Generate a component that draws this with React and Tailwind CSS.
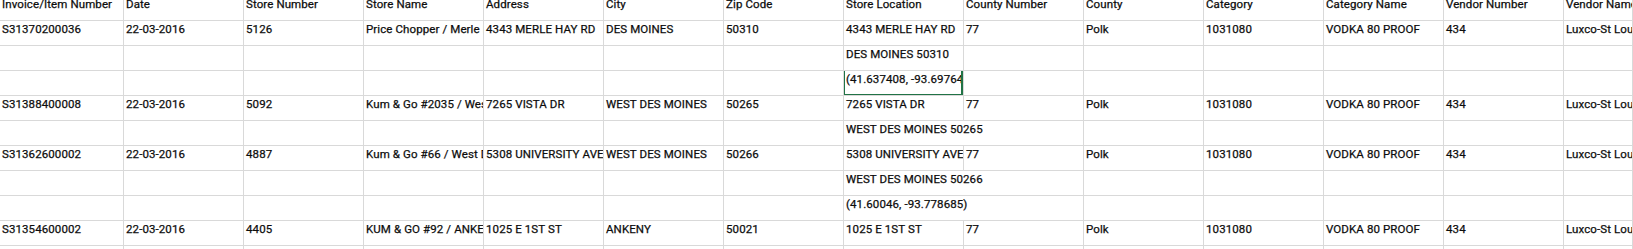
import React from "react";

const headers = [
  "Invoice/Item Number",
  "Date",
  "Store Number",
  "Store Name",
  "Address",
  "City",
  "Zip Code",
  "Store Location",
  "County Number",
  "County",
  "Category",
  "Category Name",
  "Vendor Number",
  "Vendor Name",
];

const full = (inv, store, name, addr, city, zip) => [
  inv,
  "22-03-2016",
  store,
  name,
  addr,
  city,
  zip,
  addr,
  "77",
  "Polk",
  "1031080",
  "VODKA 80 PROOF",
  "434",
  "Luxco-St Louis",
];

const loc = (text) => {
  const cells = Array(14).fill("");
  cells[7] = text;
  return cells;
};

// spill: the store location text runs over the empty cell next to it
const rows = [
  { cells: headers },
  {
    cells: full("S31370200036", "5126", "Price Chopper / Merle Hay", "4343 MERLE HAY RD", "DES MOINES", "50310"),
  },
  { cells: loc("DES MOINES 50310") },
  { cells: loc("(41.637408, -93.697647)"), selected: true },
  {
    cells: full("S31388400008", "5092", "Kum & Go #2035 / West Des Moines", "7265 VISTA DR", "WEST DES MOINES", "50265"),
  },
  { cells: loc("WEST DES MOINES 50265"), spill: true },
  {
    cells: full("S31362600002", "4887", "Kum & Go #66 / West Des Moines", "5308 UNIVERSITY AVE", "WEST DES MOINES", "50266"),
  },
  { cells: loc("WEST DES MOINES 50266"), spill: true },
  { cells: loc("(41.60046, -93.778685)"), spill: true },
  {
    cells: full("S31354600002", "4405", "KUM & GO #92 / ANKENY", "1025 E 1ST ST", "ANKENY", "50021"),
  },
  { cells: Array(14).fill("") },
];

const Cell = ({ text, first, last, spill, selected }) => {
  const width = first ? "w-[124px]" : last ? "w-[69px]" : "w-[120px]";
  return (
    <div
      className={`relative shrink-0 h-[25px] border-b border-[#d9d9d9] pl-[2px] whitespace-nowrap ${width} ${
        spill ? "overflow-visible z-10" : "overflow-hidden border-r"
      }`}
    >
      {text}
      {selected && (
        <div className="absolute left-[-1px] top-[-2px] w-[120px] h-[27px] border-2 border-[#217346] z-20">
          <div className="absolute left-[116px] top-[21px] w-[5px] h-[5px] bg-[#217346]" />
        </div>
      )}
    </div>
  );
};

export default function App() {
  return (
    <div className="w-[1633px] h-[249px] overflow-hidden bg-white">
      <div
        className="-mt-[4px] text-[11.5px] leading-[16px] text-[#0d0d0d] tracking-[0.1px] [-webkit-text-stroke:0.25px_#0d0d0d]"
        style={{ fontFamily: "Roboto, 'Noto Sans', sans-serif" }}
      >
        {rows.map((row, r) => (
          <div key={r} className="flex">
            {row.cells.map((text, c) => (
              <Cell
                key={c}
                text={text}
                first={c === 0}
                last={c === 13}
                spill={row.spill && c === 7}
                selected={row.selected && c === 7}
              />
            ))}
          </div>
        ))}
      </div>
    </div>
  );
}
